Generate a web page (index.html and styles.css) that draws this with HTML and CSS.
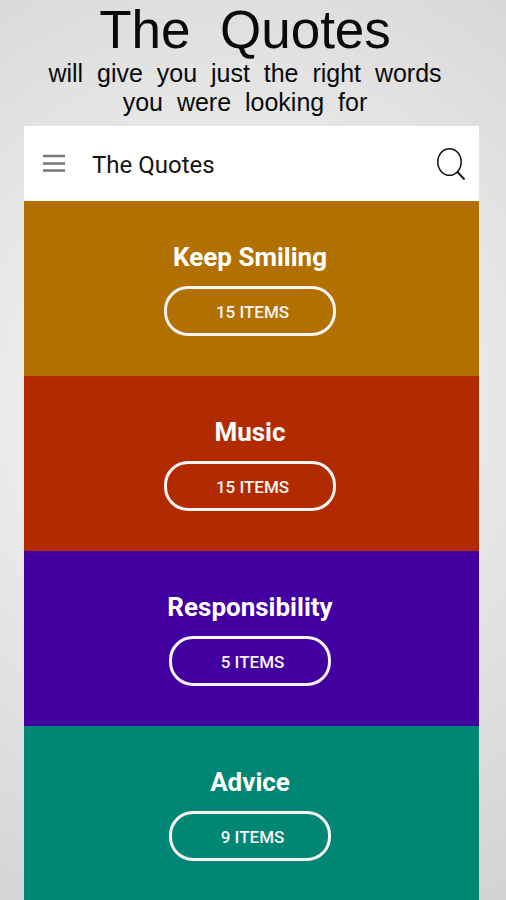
FILE: index.html
```html
<!DOCTYPE html>
<html lang="en">
<head>
<meta charset="utf-8">
<meta name="viewport" content="width=device-width, initial-scale=1">
<title>The Quotes</title>
<link rel="stylesheet" href="styles.css">
</head>
<body>
<header class="promo">
<h1 class="promo-title">The  Quotes</h1>
<p class="promo-text">will  give  you  just  the  right  words
you  were  looking  for</p>
</header>
<main class="app">
  <div class="bar">
    <button class="icon-button" type="button" aria-label="Menu">
      <svg width="24" height="24" viewBox="0 0 24 24" fill="none" stroke="#777" stroke-width="2.400"><path d="M1 4H23M1 11.500H23M1 18.500H23"/></svg>
    </button>
    <h2 class="bar-title">The Quotes</h2>
    <button class="icon-button" type="button" aria-label="Search">
      <svg width="30" height="34" viewBox="0 0 30 34" fill="none" stroke="#111" stroke-width="1.500"><ellipse cx="13.500" cy="15" rx="11.700" ry="13.300"/><path d="M21 24.500L28.500 32.500" stroke-width="2"/></svg>
    </button>
  </div>
  <section class="card smiling">
    <h3 class="card-title">Keep Smiling</h3>
    <button class="pill" type="button">15 ITEMS</button>
  </section>
  <section class="card music">
    <h3 class="card-title">Music</h3>
    <button class="pill" type="button">15 ITEMS</button>
  </section>
  <section class="card responsibility">
    <h3 class="card-title">Responsibility</h3>
    <button class="pill" type="button">5 ITEMS</button>
  </section>
  <section class="card advice">
    <h3 class="card-title">Advice</h3>
    <button class="pill" type="button">9 ITEMS</button>
  </section>
</main>
</body>
</html>
```
FILE: styles.css
```css
* {
  box-sizing: border-box;
}

body {
  margin: 0;
  min-height: 100vh;
  display: flex;
  flex-direction: column;
  padding: 0 27px 0 24px;
  background: radial-gradient(ellipse 110% 65% at 45% 45%, #ececec 35%, #d2d2d2 100%);
  font-family: Roboto, sans-serif;
}

h1, h2, h3, p {
  margin: 0;
}

button {
  font-family: inherit;
  background: none;
  cursor: pointer;
}

.promo {
  padding: 0 13px 9px 0;
  color: #0a0a0a;
  font-family: "Liberation Sans", Arial, sans-serif;
  text-align: center;
  white-space: pre-wrap;
  display: flex;
  flex-direction: column;
}

.promo-title {
  font-size: 53px;
  font-weight: 400;
  line-height: 59px;
}

.promo-text {
  font-size: 25px;
  line-height: 29px;
}

.app {
  flex: 1;
  display: flex;
  flex-direction: column;
}

.bar {
  height: 75px;
  display: flex;
  align-items: center;
  padding: 0 13px 0 18px;
  background: #fff;
}

.bar-title {
  flex: 1;
  padding: 2px 0 0 26px;
  color: #151515;
  font-size: 24px;
  font-weight: 400;
  line-height: 32px;
}

.icon-button {
  display: flex;
  padding: 0;
  border: 0;
}

.card {
  flex: 1;
  display: flex;
  flex-direction: column;
  align-items: center;
  gap: 13px;
  padding: 40px 3px 40px 0;
  color: #fff;
}

.smiling { background: #b27000; }
.music { background: #b22b00; }
.responsibility { background: #4300a1; }
.advice { background: #008674; }

.card-title {
  font-size: 26px;
  font-weight: 700;
  line-height: 32px;
}

.pill {
  height: 50px;
  padding: 2px 44px 0 49px;
  border: 3px solid #f8f4f4;
  border-radius: 24px;
  color: #f8f4f4;
  font-size: 17px;
  font-weight: 500;
  line-height: 24px;
}
```
